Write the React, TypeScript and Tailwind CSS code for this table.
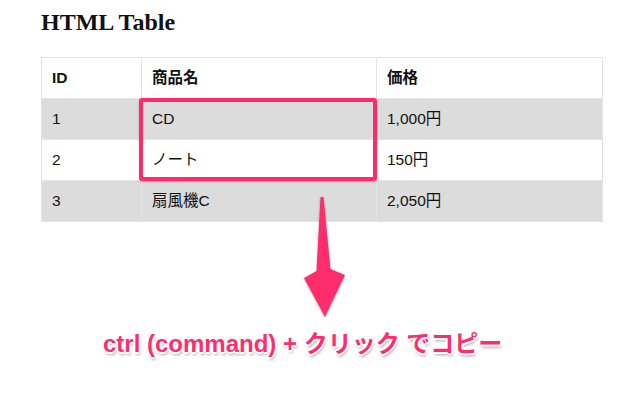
const rows = [
  { id: "1", name: "CD", price: "1,000円" },
  { id: "2", name: "ノート", price: "150円" },
  { id: "3", name: "扇風機C", price: "2,050円" },
];

function Arrow() {
  return (
    <svg
      className="absolute left-[300px] top-[195px] drop-shadow-[0_1px_1px_rgba(0,0,0,0.3)]"
      width="50"
      height="125"
      viewBox="0 0 50 125"
    >
      <path
        d="M20.5 2 L23.5 2 L30.5 74 L45 80 L25 122 L4 83 L16.5 76 Z"
        fill="#ff2d6c"
        strokeLinejoin="round"
      />
    </svg>
  );
}

export default function App() {
  return (
    <div className="relative h-[400px] w-[640px] overflow-hidden bg-white pl-[41px]">
      <h2 className="pt-[8px] text-[24px] leading-[28px] font-bold text-[#111] [font-family:'Liberation_Serif',serif]">
        HTML Table
      </h2>

      <div className="relative mt-[21px] w-[562px] [font-family:'Liberation_Sans','Noto_Sans_CJK_JP',sans-serif] text-[15.5px] text-[#111]">
        <table className="w-full border-collapse">
          <thead>
            <tr className="h-[41px] bg-white">
              <th className="w-[100px] border border-[#e4e4e4] pl-[10px] text-left font-bold">ID</th>
              <th className="w-[235px] border border-[#e4e4e4] pl-[10px] text-left font-bold">商品名</th>
              <th className="border border-[#e4e4e4] pl-[10px] text-left font-bold">価格</th>
            </tr>
          </thead>
          <tbody>
            {rows.map((r, i) => (
              <tr key={r.id} className={i % 2 === 0 ? "h-[41px] bg-[#dcdcdc]" : "h-[41px] bg-white"}>
                <td className="border border-[#e4e4e4] pl-[10px]">{r.id}</td>
                <td className="border border-[#e4e4e4] pl-[10px]">{r.name}</td>
                <td className="border border-[#e4e4e4] pl-[10px]">{r.price}</td>
              </tr>
            ))}
          </tbody>
        </table>

        {/* highlight over CD / ノート */}
        <div className="absolute left-[98px] top-[41px] h-[83px] w-[238px] rounded-[3px] border-[4px] border-[#ff2a6d] shadow-[0_1px_2px_rgba(0,0,0,0.25)]" />
      </div>

      <Arrow />

      <p className="mt-[108px] pl-[62px] text-[24px] leading-[28px] font-bold text-[#ff2d6e] [font-family:'Liberation_Sans','Noto_Sans_CJK_JP',sans-serif] [text-shadow:-2px_0_0_#fff,2px_0_0_#fff,0_-2px_0_#fff,0_2px_0_#fff,-1px_-1px_0_#fff,1px_1px_0_#fff,1px_3px_3px_rgba(0,0,0,0.35)]">
        ctrl (command) + クリック でコピー
      </p>
    </div>
  );
}
